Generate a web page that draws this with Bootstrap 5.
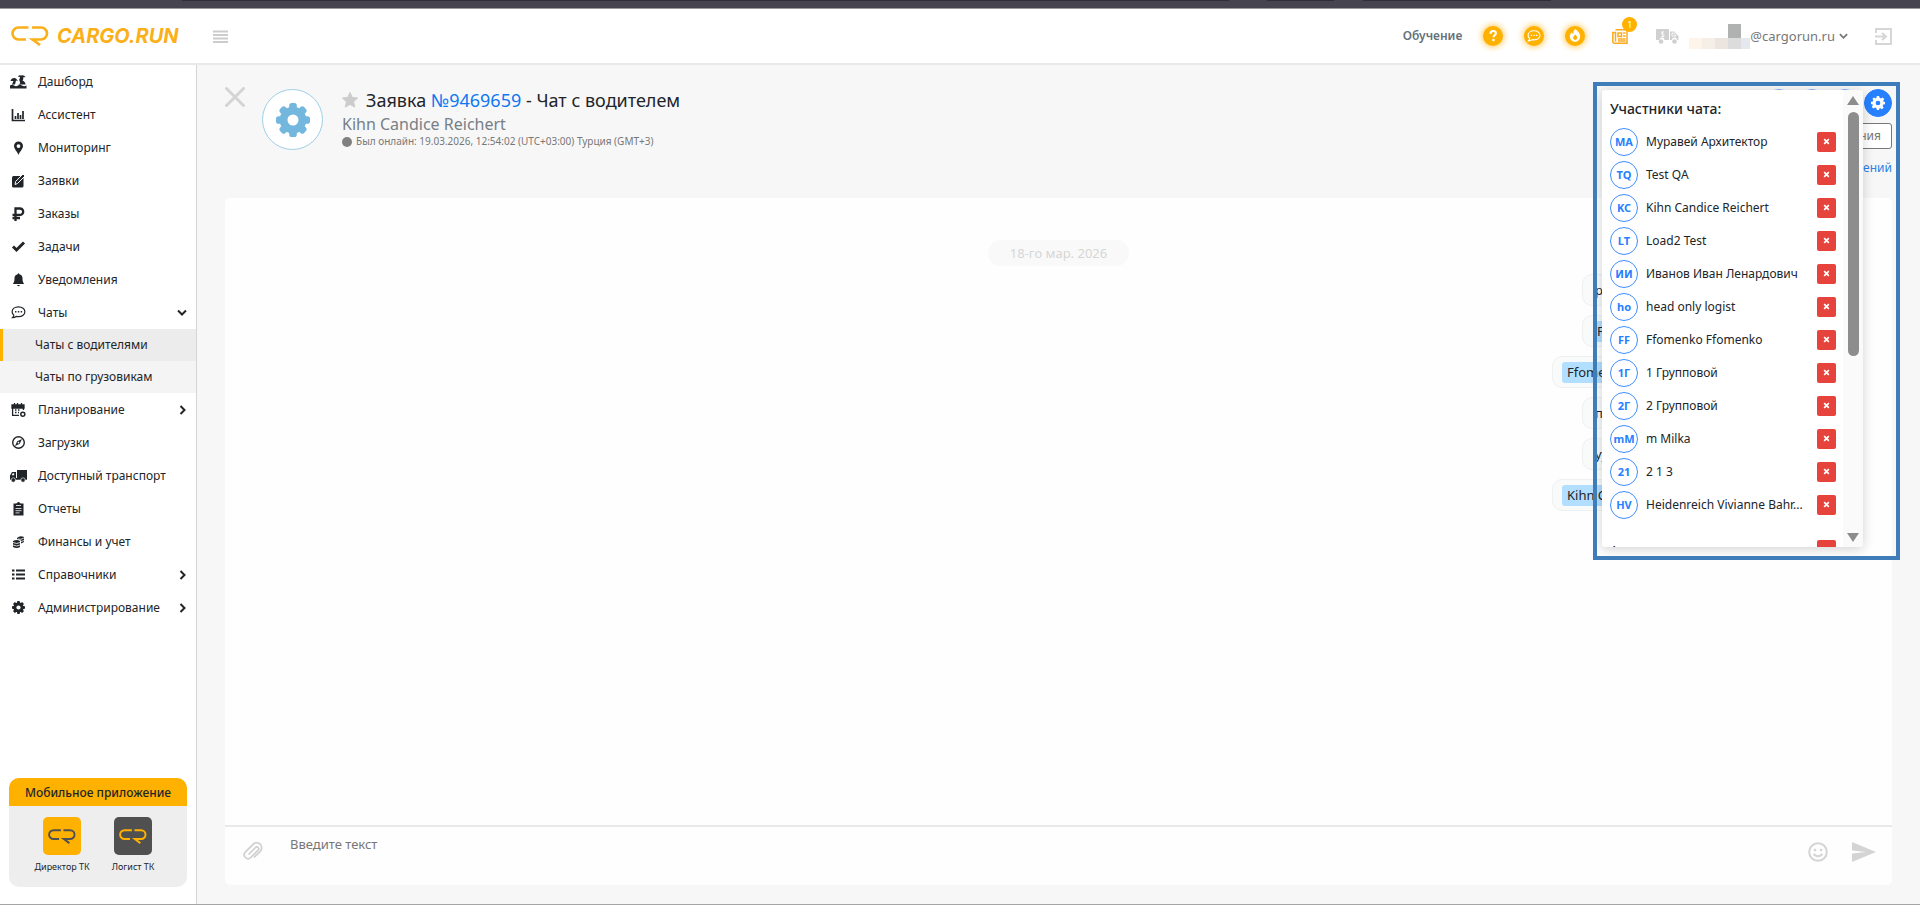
<!DOCTYPE html>
<html lang="ru">
<head>
<meta charset="utf-8">
<meta name="viewport" content="width=device-width, initial-scale=1">
<title>CARGO.RUN</title>
<link href="https://cdn.jsdelivr.net/npm/bootstrap@5.3.0/dist/css/bootstrap.min.css" rel="stylesheet">
<style>
:root{--brand:#ffb100;--ink:#212529;--blue:#2680ff}
body{font-family:"Noto Sans","Open Sans",sans-serif;font-size:13px;line-height:20px;color:var(--ink);background:#f7f7f7}
a{text-decoration:none;color:inherit}
button{font:inherit}
.page{min-height:100vh;border-bottom:1px solid #a5a5a5}
.chrome{height:9px;background:#45444f;border-bottom:1px solid #9b9b9f}
.chrome i{height:1px;background:#2f2e38}
.topbar{height:56px;background:#fff;border-bottom:2px solid #e9e9e9}
.logo{color:#fbb01b;margin-left:11px}
.brand-text{font:italic 700 20px/20px Inter,sans-serif}
.burger{margin-left:34px}
.bare{border:0;background:none;padding:0;line-height:0}
.tools{padding-right:28px}
.tool{margin-left:27px}
.train{font-size:12px;color:#66717a}
.round{width:20px;height:20px;border-radius:50%;background:var(--brand);box-shadow:0 0 6px 1px #ffc95a;margin-left:21px}
.count{top:-12px;left:10px;width:15px;height:15px;border-radius:50%;background:var(--brand);color:#fff;font-size:9px;line-height:15px}
.account{color:#777;line-height:20px;margin-left:10px}
.mosaic{width:61px;height:25px;background:linear-gradient(#b0b1b1,#b0b1b1) 39px 0/13px 14px no-repeat,linear-gradient(90deg,#fff4ea 13px,#f6efe8 13px 26px,#ebe4df 26px 39px,#dcdcdc 39px 52px,#e5e9ef 52px) 0 14px/100% 11px no-repeat}
.side{width:197px;background:#fff;border-right:1px solid #d5d5d5;font-size:12px}
.side .item{height:33px;padding:0 9px 0 10px}
.side .item svg{flex:none}
.side .item .lbl{margin-left:11px}
.side .sub{height:32px;padding-left:35px;background:#f4f4f4}
.side .sub.on{background:#ececec;border-left:3px solid var(--brand);padding-left:32px}
.app-card{margin:0 9px 17px;border-radius:10px;background:#eee;height:109px}
.app-card .cap{height:28px;background:var(--brand);font-weight:500;line-height:29px}
.apps{gap:22px;padding:11px 7px 0 0}
.app-ico{width:38px;height:38px;border-radius:5px}
.app-ico.gold{background:#ffb100;color:#505050}
.app-ico.dark{background:#505050;color:#ffb100}
.app-name{font-size:9px;line-height:14px;margin-top:5px}
.main{padding:22px 28px 19px}
.chat-head{height:111px}
.avatar{width:61px;height:61px;border-radius:50%;border:1px solid #9fcfe8;background:#fff;margin:2px 0 0 17px;color:#74b7de}
.titles{margin-left:19px}
.titles h1{font-size:18px;line-height:26px;font-weight:400}
.titles h1 a{color:#0d78f2}
.who{font-size:16px;line-height:22px;color:#777f86}
.seen{font-size:10px;line-height:13px;color:#777}
.dot{width:10px;height:10px;border-radius:50%;background:#808080}
.head-tools{padding-top:2px;gap:6px}
.circles{gap:5px}
.circ{width:28px;height:28px;border-radius:50%;border:1px solid #7ab0ff;background:#fff}
.circ.fill{background:var(--blue);border-color:var(--blue)}
.outl{border:1px solid #777;border-radius:3px;background:#fff;color:#777;height:26px;padding:0 10px;font-size:12px;line-height:20px}
.notif{color:#2a82e8;font-size:12px;padding-top:3px}
.panel{background:#fefefe;border-radius:5px}
.day{margin-top:42px;width:141px;height:26px;line-height:26px;border-radius:13px;background:#f9f9f9;color:#d6d6d6}
.msgs{margin:8px 60px 0 0;gap:9px}
.bubble{width:250px;height:32px;border:1px solid #eff1f1;border-radius:10px;background:#f9fbfb;padding:0 12px;line-height:30px}
.bubble.wide{width:280px;padding:0 9px}
.tagged{display:inline-block;background:#b2dfff;border-radius:3px;padding:0 5px;line-height:21px}
.bubble:not(.wide) .tagged{padding:0 2px}
.composer{height:60px;border-top:2px solid #e9e9e9;padding:0 16px 0 18px}
.composer .bare{margin-top:15px}
.composer input{border:0;background:none;outline:0;padding:0;height:20px;margin:7px 0 0 27px}
.composer input::placeholder{color:#777;opacity:1}
.focus-frame{top:17px;right:20px;width:307px;height:478px;border:4px solid #3f7cba;pointer-events:none;z-index:3}
.members{top:25px;right:57px;width:261px;height:457px;background:#fff;border-radius:3px;box-shadow:0 2px 12px rgba(0,0,0,.18);overflow:hidden;z-index:2}
.members .rows{padding:9px 7px 0 8px}
.members h2{font-size:14px;line-height:20px;font-weight:500;margin:0 0 6px}
.person{height:33px}
.cutrow{margin-top:19px}
.ini{width:28px;height:28px;border-radius:50%;border:1px solid #3d8dff;color:var(--blue);font-weight:700;font-size:11px;flex:none;line-height:26px}
.nm{margin-left:8px;width:163px;font-size:12px}
.del{width:19px;height:20px;border:0;border-radius:2px;background:#e5433c;margin-left:8px;flex:none;padding:0;line-height:0}
.track{width:20px;background:#fafafa;padding:6px 0 5px}
.thumb{width:11px;height:244px;border-radius:6px;background:#8d8d8d;margin-top:6px}
</style>
</head>
<body>
<svg width="0" height="0" class="d-none">
<symbol id="cr" viewBox="0 0 38 20"><path d="M17.500 1.500H7.500a6 6 0 0 0 0 12H15M21 1.500h9a6 6 0 0 1 0 12h-8.500l7.500 5.500" fill="none" stroke="currentColor" stroke-width="2.600"/></symbol>
<symbol id="gear" viewBox="0 0 24 24"><path fill-rule="evenodd" d="M10 0h4l.7 3.200 2.400 1 2.800-1.800 2.800 2.800-1.800 2.800 1 2.300L24 10v4l-3.100.700-1 2.300 1.800 2.800-2.800 2.800-2.800-1.800-2.400 1L14 24h-4l-.7-3.200-2.400-1-2.800 1.800-2.800-2.800 1.800-2.800-1-2.300L0 14v-4l3.100-.7 1-2.300L2.300 5.200l2.800-2.800 2.800 1.800 1.400-1zM12 8a4 4 0 1 0 0 8 4 4 0 0 0 0-8z" fill="currentColor"/></symbol>
<symbol id="cog" viewBox="-12 -12 24 24"><g fill="currentColor"><rect x="-2.700" y="-12" width="5.400" height="24" rx="1.800"/><rect x="-2.700" y="-12" width="5.400" height="24" rx="1.800" transform="rotate(45)"/><rect x="-2.700" y="-12" width="5.400" height="24" rx="1.800" transform="rotate(90)"/><rect x="-2.700" y="-12" width="5.400" height="24" rx="1.800" transform="rotate(135)"/><circle r="9.400"/></g><circle r="3.900" fill="#fff"/></symbol>
<symbol id="chat" viewBox="0 0 16 16"><path d="M8 2c4 0 6.800 2.300 6.800 5.200S12 12.500 8 12.500c-.9 0-1.700-.1-2.400-.3-1 .8-2.400 1.300-4 1.300.9-.9 1.400-1.800 1.400-2.700C2 10 1.200 8.700 1.200 7.200 1.200 4.300 4 2 8 2z" fill="none" stroke="currentColor" stroke-width="1.300"/><path d="M4.300 6.500h1.500V8H4.300zm3 0h1.500V8H7.300zm3 0h1.500V8h-1.500z" fill="currentColor"/></symbol>
<symbol id="right" viewBox="0 0 8 10"><path d="m2 1 4 4-4 4" fill="none" stroke="currentColor" stroke-width="2"/></symbol>
<symbol id="down" viewBox="0 0 10 8"><path d="m1 2 4 4 4-4" fill="none" stroke="currentColor" stroke-width="2"/></symbol>
<symbol id="x" viewBox="0 0 6 6"><path d="m1 1 4 4m0-4L1 5" stroke="#fff" stroke-width="1.500"/></symbol>
</svg>
<div class="page d-flex flex-column">
<div class="chrome d-flex"><i style="margin-left:9.500%;width:54.500%"></i><i style="margin-left:2%;width:3.500%"></i><i style="margin-left:1.500%;width:9.800%"></i></div>
<header class="topbar d-flex align-items-center">
  <a href="#" class="logo d-flex align-items-center"><svg width="38" height="20"><use href="#cr"/></svg><span class="brand-text ms-2">CARGO.RUN</span></a>
  <button class="bare burger" aria-label="Меню"><svg width="15" height="13"><path d="M0 1.500h15M0 5h15M0 8.500h15M0 12h15" stroke="#ccc" stroke-width="1.800"/></svg></button>
  <div class="tools ms-auto d-flex align-items-center">
    <a href="#" class="train fw-semibold">Обучение</a>
    <button class="bare round" aria-label="Помощь"><svg width="20" height="20"><path d="M7.300 7.800C7.500 6 8.700 5 10.200 5c1.600 0 2.700.9 2.700 2.300 0 2-2.500 2-2.500 4" fill="none" stroke="#fff" stroke-width="2"/><circle cx="10.400" cy="14" r="1.300" fill="#fff"/></svg></button>
    <button class="bare round text-white" aria-label="Чат"><svg width="14" height="20"><use href="#chat"/></svg></button>
    <button class="bare round" aria-label="Новое"><svg width="20" height="20"><path d="M10.200 3c3 2 5 4.500 5 7.500a5.200 5.200 0 0 1-10.400 0c0-1.900 1-3.400 2.300-4.300.1 1 .5 1.700 1.200 2C8.200 6 8.800 4.200 10.200 3z" fill="#fff"/><path d="M10.300 8.500c1.400 1.300 2 2.300 2 3.300a2.100 2.100 0 0 1-4.200 0c0-1 .8-2 2.200-3.300z" fill="#ffb100"/></svg></button>
    <button class="bare tool position-relative" aria-label="Новости"><svg width="16" height="15"><path d="M3.500.8H15v13.400H2.500A1.700 1.700 0 0 1 .8 12.500V3.500h2.700v9M6 4h3.500v3.500H6zM11 4h2.500M11 7h2.500M6 10h7.500M6 12h7.500" fill="none" stroke="#fbaa20" stroke-width="1.500"/></svg><span class="count position-absolute text-center">1</span></button>
    <button class="bare tool" aria-label="Транспорт"><svg width="24" height="17"><path d="M1.500 1H13q1 0 1 1v10H9.500a2.500 2.500 0 0 0-5 0H1V2q0-1 .5-1zM15 3.500h4l4.500 4.500v4H22a2.500 2.500 0 0 0-5 0h-2z" fill="#d0d0d0"/><circle cx="6" cy="13.500" r="2.300" fill="#d0d0d0"/><circle cx="19.500" cy="13.500" r="2.300" fill="#d0d0d0"/><path d="M9 4H7.500Q6.500 4 6.500 5t1 1.200T9 7.500 8 8.700H6.500M7.700 3v7M17 5h2l2 3h-4z" fill="none" stroke="#fff" stroke-width=".8"/></svg></button>
    <button class="bare account d-flex align-items-center"><span class="mosaic"></span><span>@cargorun.ru</span><svg class="ms-1" width="9" height="8"><use href="#down"/></svg></button>
    <button class="bare tool" aria-label="Выход"><svg width="17" height="17"><path d="M1 5V1h15v15H1v-4M0 8.500h10M7 5l4 3.500L7 12" fill="none" stroke="#d6d6d6" stroke-width="2"/></svg></button>
  </div>
</header>
<div class="d-flex flex-fill">
<nav class="side d-flex flex-column flex-shrink-0">
  <a href="#" class="item d-flex align-items-center"><svg width="17" height="16"><path d="M0 11.500q2-1.500 4 0t4 0 4 0 4.500 0V14.500H0zM.5 7C1 4.500 4 3 6 4.500L8 7 6 6.500l-1 4H2l1.500-3.500zM8 2.500q1-1.800 3-1 3-1 4.500 1.500l-2.500.5c1 1.500-.5 3-.5 3 2 1 3 2 3 4H7c3 0 4-1.500 2.500-3.500C8.500 5.500 10.500 4 10 3z" fill="currentColor"/></svg><span class="lbl">Дашборд</span></a>
  <a href="#" class="item d-flex align-items-center"><svg width="17" height="16"><path d="M2.500 2v11.500H15M5.500 12V9M8 12V6m2.500 6V8M13 12V4" fill="none" stroke="currentColor" stroke-width="1.700"/></svg><span class="lbl">Ассистент</span></a>
  <a href="#" class="item d-flex align-items-center"><svg width="17" height="16"><path fill-rule="evenodd" d="M8.500 1.500a4.500 4.500 0 0 1 4.500 4.500c0 3-3 5-4.500 9C7 11 4 9 4 6a4.500 4.500 0 0 1 4.500-4.500zm0 2.700a1.900 1.900 0 1 0 0 3.800 1.900 1.900 0 0 0 0-3.800z" fill="currentColor"/></svg><span class="lbl">Мониторинг</span></a>
  <a href="#" class="item d-flex align-items-center"><svg width="17" height="16"><rect x="2" y="3" width="11.500" height="11.500" rx="1.500" fill="currentColor"/><path d="m5 11.500.6-3L13 1l2 2-7.500 7.500z" fill="currentColor" stroke="#fff"/></svg><span class="lbl">Заявки</span></a>
  <a href="#" class="item d-flex align-items-center"><svg width="17" height="16"><path d="M5.500 15V2.500H10a3.200 3.200 0 0 1 0 6.400H2.500M2.500 12H10" fill="none" stroke="currentColor" stroke-width="2.300"/></svg><span class="lbl">Заказы</span></a>
  <a href="#" class="item d-flex align-items-center"><svg width="17" height="16"><path d="m3 7.500 3.500 3.500L14 3.500" fill="none" stroke="currentColor" stroke-width="3"/></svg><span class="lbl">Задачи</span></a>
  <a href="#" class="item d-flex align-items-center"><svg width="17" height="16"><path d="M8.500 1 9.500 2.200c2.300.6 3 2.300 3 4.300 0 3 .6 4 1.700 5.500H2.800C3.900 10.500 4.500 9.500 4.500 6.500c0-2 .7-3.700 3-4.300zM7 13h3q-1.500 2.500-3 0z" fill="currentColor"/></svg><span class="lbl">Уведомления</span></a>
  <a href="#" class="item d-flex align-items-center"><svg width="17" height="15"><use href="#chat"/></svg><span class="lbl">Чаты</span><svg class="ms-auto" width="10" height="9"><use href="#down"/></svg></a>
  <a href="#" class="sub on d-flex align-items-center">Чаты с водителями</a>
  <a href="#" class="sub d-flex align-items-center">Чаты по грузовикам</a>
  <a href="#" class="item d-flex align-items-center"><svg width="17" height="16"><path d="M2 3h12v3H2zM4.500 1v3m3-3v3m4-3v3" fill="currentColor" stroke="currentColor" stroke-width="1.300"/><path d="M2.600 5v8.400H9M13.400 5v3M5 8h1.500m1.500 0h1.500M5 10.500h1.500m1.500 0h1" fill="none" stroke="currentColor" stroke-width="1.300"/><circle cx="12.800" cy="12.300" r="2" fill="none" stroke="currentColor" stroke-width="1.500"/></svg><span class="lbl">Планирование</span><svg class="ms-auto" width="9" height="10"><use href="#right"/></svg></a>
  <a href="#" class="item d-flex align-items-center"><svg width="17" height="16"><circle cx="8.500" cy="7.500" r="5.800" fill="none" stroke="currentColor" stroke-width="1.400"/><path fill-rule="evenodd" d="M12 4 9.800 8.800 5 11l2.200-4.800zM8.500 6.700a.8.800 0 1 0 0 1.700.8.800 0 0 0 0-1.700z" fill="currentColor"/></svg><span class="lbl">Загрузки</span></a>
  <a href="#" class="item d-flex align-items-center"><svg width="17" height="16"><path d="M7 2h10v8.500H7zM2 4h4v6.500H0V7.500zM0 10h17v1.800H0z" fill="currentColor"/><path d="M2.700 5.300h1.500v2H1.700z" fill="#fff"/><g fill="currentColor" stroke="#fff" stroke-width=".6"><circle cx="3.300" cy="12" r="2.200"/><circle cx="13" cy="12" r="2.200"/></g></svg><span class="lbl">Доступный транспорт</span></a>
  <a href="#" class="item d-flex align-items-center"><svg width="17" height="16"><path d="M3.500 2.500h2.800q2.200-3 4.400 0h2.800v12h-10z" fill="currentColor"/><path d="M6 4.500h5M5.500 7.500h6m-6 2.200h6m-6 2.200h4" stroke="#fff" stroke-width=".8"/></svg><span class="lbl">Отчеты</span></a>
  <a href="#" class="item d-flex align-items-center"><svg width="17" height="16"><path d="M3 7q4-2 7 0v6q-3 2-7 0zM7 4q3-3 7-1v5l-3 1.500V6.500Q9 5 7 5z" fill="currentColor"/><path d="M3 8.500q4 2 7 0M3 11q4 2 7 0M8 5q3 1 6-1M11 7.500l3-1" stroke="#fff" stroke-width=".8" fill="none"/></svg><span class="lbl">Финансы и учет</span></a>
  <a href="#" class="item d-flex align-items-center"><svg width="17" height="16"><path d="M2 3.500h2.500M6 3.500h9M2 7.500h2.500M6 7.500h9M2 11.500h2.500M6 11.500h9" stroke="currentColor" stroke-width="1.800"/></svg><span class="lbl">Справочники</span><svg class="ms-auto" width="9" height="10"><use href="#right"/></svg></a>
  <a href="#" class="item d-flex align-items-center"><svg width="17" height="13"><use href="#cog"/></svg><span class="lbl">Администрирование</span><svg class="ms-auto" width="9" height="10"><use href="#right"/></svg></a>
  <div class="app-card overflow-hidden mt-auto">
    <div class="cap text-center">Мобильное приложение</div>
    <div class="apps d-flex justify-content-center">
      <a href="#" class="d-flex flex-column align-items-center"><span class="app-ico gold d-flex align-items-center justify-content-center"><svg width="28" height="15"><use href="#cr"/></svg></span><span class="app-name">Директор ТК</span></a>
      <a href="#" class="d-flex flex-column align-items-center"><span class="app-ico dark d-flex align-items-center justify-content-center"><svg width="28" height="15"><use href="#cr"/></svg></span><span class="app-name">Логист ТК</span></a>
    </div>
  </div>
</nav>
<main class="main position-relative flex-fill d-flex flex-column">
  <div class="chat-head d-flex align-items-start">
    <button class="bare" aria-label="Закрыть"><svg width="20" height="20"><path d="m1.500 1.500 17 17m0-17-17 17" stroke="#d4d4d4" stroke-width="3" stroke-linecap="round"/></svg></button>
    <span class="avatar d-flex align-items-center justify-content-center"><svg width="34" height="34"><use href="#cog"/></svg></span>
    <div class="titles">
      <h1 class="m-0 d-flex align-items-center"><svg class="me-2" width="16" height="16" viewBox="0 0 16 16"><path d="m8 .5 2.300 4.900 5.300.6-4 3.700 1.100 5.400L8 12.400l-4.700 2.700 1.100-5.400L.4 6l5.300-.6z" fill="#ccc" stroke="#ccc" stroke-linejoin="round"/></svg><span>Заявка <a href="#">№9469659</a> - Чат с водителем</span></h1>
      <div class="who">Kihn Candice Reichert</div>
      <div class="seen d-flex align-items-center"><span class="dot me-1"></span>Был онлайн: 19.03.2026, 12:54:02 (UTC+03:00) Турция (GMT+3)</div>
    </div>
    <div class="head-tools ms-auto d-flex flex-column align-items-end">
      <div class="circles d-flex"><button class="circ" aria-label="Звонок"></button><button class="circ" aria-label="Файлы"></button><button class="circ" aria-label="Поиск"></button><button class="circ fill bare d-flex align-items-center justify-content-center text-white" aria-label="Участники"><svg width="14" height="14"><use href="#gear"/></svg></button></div>
      <button class="outl">Сообщения</button>
      <a href="#" class="notif">уведомлений</a>
    </div>
  </div>
  <section class="panel flex-fill d-flex flex-column">
    <div class="day align-self-center text-center">18-го мар. 2026</div>
    <div class="msgs d-flex flex-column align-items-end">
      <div class="bubble">ре</div>
      <div class="bubble"><span class="tagged">F</span></div>
      <div class="bubble wide"><span class="tagged">Ffome</span></div>
      <div class="bubble">п</div>
      <div class="bubble">уу</div>
      <div class="bubble wide"><span class="tagged">Kihn C</span></div>
    </div>
    <form class="composer d-flex align-items-start mt-auto">
      <button type="button" class="bare" aria-label="Прикрепить"><svg width="20" height="20" viewBox="0 0 20 20"><path d="m5.500 12.500 7-7a1.900 1.900 0 0 1 2.700 2.700l-7.500 7.500a3.900 3.900 0 0 1-5.500-5.500l7.800-7.900a5 5 0 0 1 7.300 7L11 15.500" fill="none" stroke="#d0d0d0" stroke-width="1.700"/></svg></button>
      <input class="flex-fill" aria-label="Сообщение" placeholder="Введите текст">
      <button type="button" class="bare" aria-label="Смайлы"><svg width="20" height="20"><circle cx="10" cy="10" r="8.800" fill="none" stroke="#d4d4d4" stroke-width="2"/><circle cx="7" cy="8" r="1.300" fill="#d4d4d4"/><circle cx="13" cy="8" r="1.300" fill="#d4d4d4"/><path d="M5.500 12q4.500 4.500 9 0" fill="none" stroke="#d4d4d4" stroke-width="2"/></svg></button>
      <button class="bare ms-4" aria-label="Отправить"><svg width="24" height="20"><path d="M0 0 24 10 0 20v-8.500l14-1.500L0 8.500z" fill="#d4d4d4"/></svg></button>
    </form>
  </section>
  <aside class="members position-absolute d-flex">
    <div class="rows flex-fill">
      <h2>Участники чата:</h2>
      <div id="people"></div>
      <div class="cutrow d-flex align-items-start justify-content-between"><span>А</span><button class="del" aria-label="Удалить"><svg width="7" height="7"><use href="#x"/></svg></button></div>
    </div>
    <div class="track d-flex flex-column align-items-center"><svg width="12" height="10"><path d="M6 0 12 9H0z" fill="#8d8d8d"/></svg><span class="thumb"></span><svg class="mt-auto" width="12" height="10"><path d="M6 10 12 1H0z" fill="#8d8d8d"/></svg></div>
  </aside>
  <div class="focus-frame position-absolute"></div>
</main>
</div>
</div>
<script>
const people=[["МА","Муравей Архитектор"],["TQ","Test QA"],["KC","Kihn Candice Reichert"],["LT","Load2 Test"],["ИИ","Иванов Иван Ленардович"],["ho","head only logist"],["FF","Ffomenko Ffomenko"],["1Г","1 Групповой"],["2Г","2 Групповой"],["mM","m Milka"],["21","2 1 3"],["HV","Heidenreich Vivianne Bahr..."]];
document.getElementById("people").innerHTML=people.map(([i,n])=>`<div class="person d-flex align-items-center"><span class="ini text-center">${i}</span><span class="nm text-truncate">${n}</span><button class="del" aria-label="Удалить"><svg width="7" height="7"><use href="#x"/></svg></button></div>`).join("");
</script>
<script src="https://cdn.jsdelivr.net/npm/bootstrap@5.3.0/dist/js/bootstrap.bundle.min.js"></script>
</body>
</html>
